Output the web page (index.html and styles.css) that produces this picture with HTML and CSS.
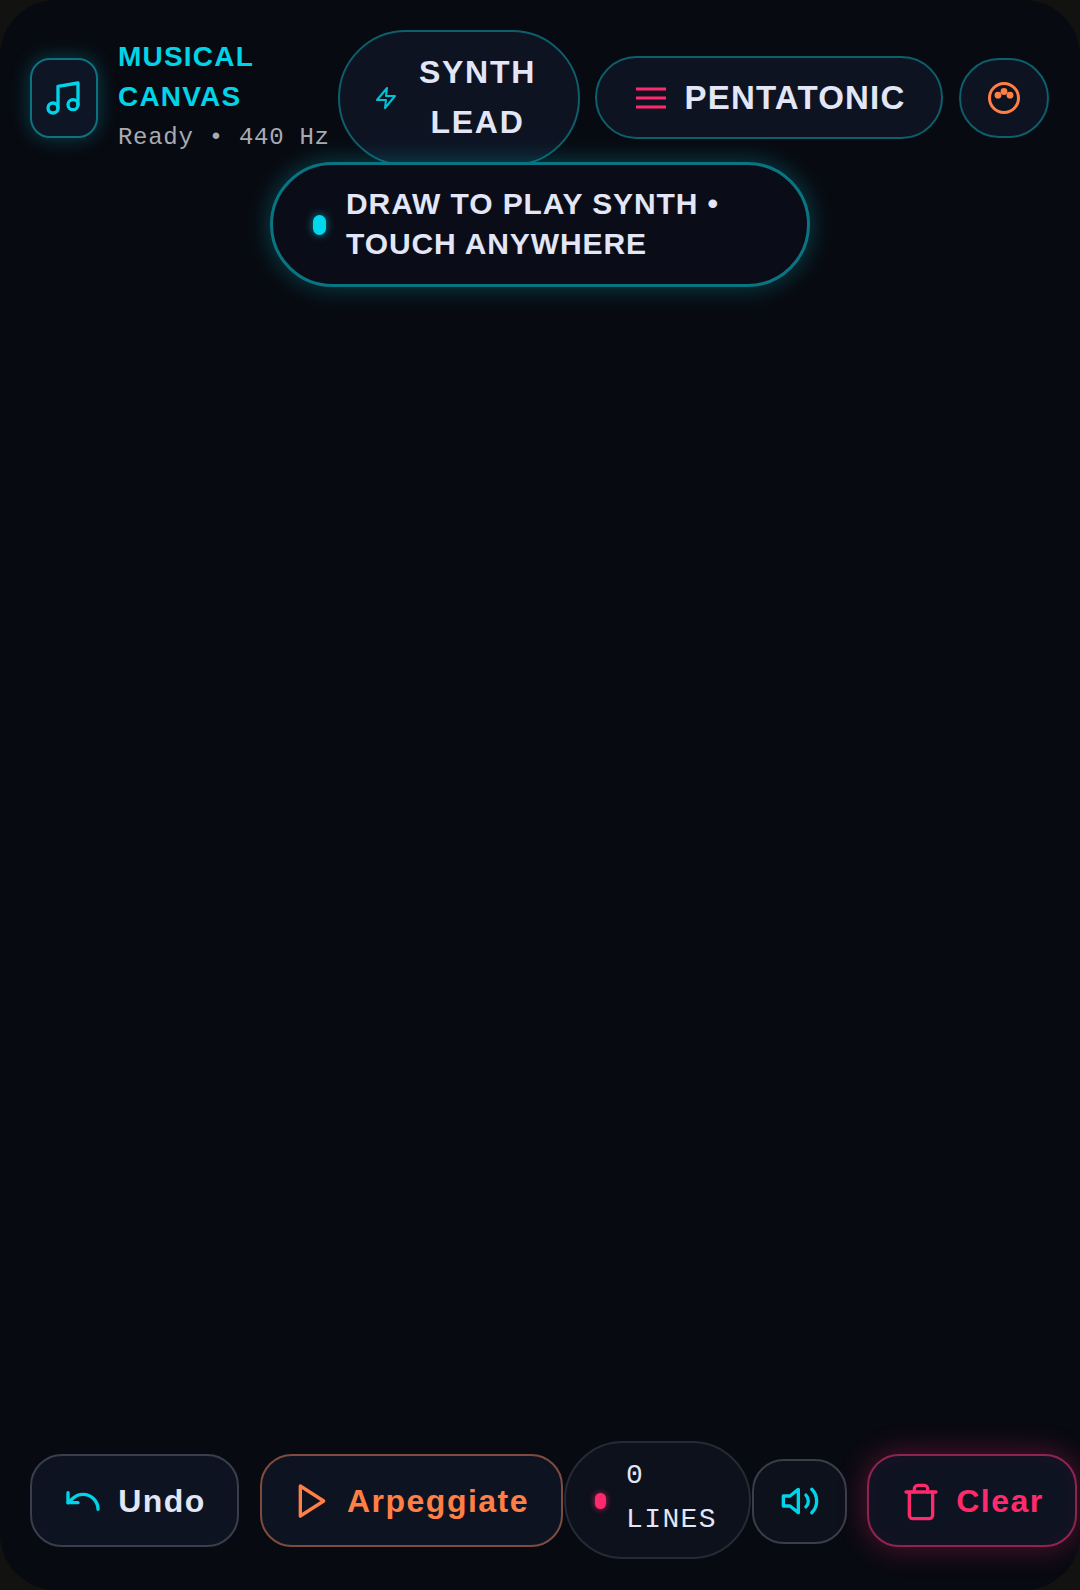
FILE: index.html
```html
<!DOCTYPE html>
<html>

<head>
    <meta charset="UTF-8" />
    <meta name="viewport" content="width=device-width, initial-scale=1" />
    <title>Musical Canvas</title>
    <link rel="stylesheet" href="styles.css">
</head>

<body>
    <section class="screen">
        <header class="top">
            <div class="logo">
                <svg class="logo-icon" viewBox="0 0 24 24">
                    <path d="M9 18V5l12-2v13" />
                    <circle cx="6" cy="18" r="3" />
                    <circle cx="18" cy="16" r="3" />
                </svg>
            </div>
            <div class="brand">
                <div class="brand-title">MUSICAL CANVAS</div>
                <div class="brand-status">Ready • 440 Hz</div>
            </div>
            <button class="pill synth">
                <svg class="synth-icon" viewBox="0 0 24 24">
                    <path d="M13 2 3 14h9l-1 8 10-12h-9l1-8z" />
                </svg>
                <span>SYNTH LEAD</span>
            </button>
            <button class="pill scale">
                <svg class="scale-icon" viewBox="0 0 30 24">
                    <path d="M0 3h30M0 12h30M0 21h30" />
                </svg>
                <span>PENTATONIC</span>
            </button>
            <button class="pill palette">
                <svg class="palette-icon" viewBox="0 0 32 32">
                    <circle class="ring" cx="16" cy="16" r="14.5" />
                    <circle cx="10" cy="13.2" r="3.4" />
                    <circle cx="16" cy="9.5" r="3.4" />
                    <circle cx="22" cy="13.2" r="3.4" />
                </svg>
            </button>
        </header>

        <div class="hint">
            <i class="hint-dot"></i>
            <span>DRAW TO PLAY SYNTH • TOUCH ANYWHERE</span>
        </div>

        <footer class="bottom">
            <button class="action undo">
                <svg class="undo-icon" viewBox="0 0 24 24">
                    <path d="M3 7v6h6" />
                    <path d="M21 17a9 9 0 0 0-9-9 9 9 0 0 0-6 2.3L3 13" />
                </svg>
                <span>Undo</span>
            </button>
            <button class="action arp">
                <svg class="arp-icon" viewBox="0 0 24 24">
                    <path d="M5 3l14 9-14 9z" />
                </svg>
                <span>Arpeggiate</span>
            </button>
            <div class="lines">
                <i class="lines-dot"></i>
                <span>0 LINES</span>
            </div>
            <button class="sound">
                <svg class="sound-icon" viewBox="0 0 24 24">
                    <path d="M11 5 6 9H2v6h4l5 4V5z" />
                    <path d="M15.54 8.46a5 5 0 0 1 0 7.07" />
                    <path d="M19.07 4.93a10 10 0 0 1 0 14.14" />
                </svg>
            </button>
            <button class="action clear">
                <svg class="clear-icon" viewBox="0 0 24 24">
                    <path d="M3 6h18" />
                    <path d="M19 6v14c0 1-1 2-2 2H7c-1 0-2-1-2-2V6" />
                    <path d="M8 6V4c0-1 1-2 2-2h4c1 0 2 1 2 2v2" />
                </svg>
                <span>Clear</span>
            </button>
        </footer>
    </section>
</body>

</html>
```

FILE: styles.css
```css
* {
    box-sizing: border-box;
}

body {
    margin: 0;
    padding: 0;
    width: 1080px;
    height: 1590px;
    overflow: hidden;
    background-color: #121310;
    font-family: "Liberation Sans", Arial, sans-serif;
}

svg {
    display: block;
    flex: none;
    fill: none;
    stroke-linecap: round;
    stroke-linejoin: round;
}

button {
    font-family: inherit;
    padding: 0;
    cursor: pointer;
}

.screen {
    width: 1080px;
    height: 1590px;
    display: flex;
    flex-direction: column;
    border-radius: 56px;
    background-color: #080a11;
    overflow: hidden;
}

.top {
    display: flex;
    align-items: center;
    padding: 30px 31px 0 30px;
}

.logo {
    width: 68px;
    height: 80px;
    padding-right: 2px;
    display: flex;
    align-items: center;
    justify-content: center;
    flex: none;
    border: 2px solid #0d7280;
    border-radius: 20px;
    background-color: #0e1626;
    box-shadow: 0 0 20px rgba(0, 212, 232, 0.28);
}

.logo-icon {
    width: 40px;
    height: 40px;
    stroke: #00d4e8;
    stroke-width: 2;
}

.brand {
    width: 220px;
    margin: 0 0 3px 20px;
    flex: none;
}

.brand-title {
    width: 180px;
    margin-bottom: 2px;
    color: #00d4e8;
    font-size: 28px;
    font-weight: bold;
    line-height: 40px;
    letter-spacing: 1.2px;
}

.brand-status {
    color: #a9abb3;
    font-family: "Liberation Mono", monospace;
    font-size: 24px;
    line-height: 38px;
    letter-spacing: 0.72px;
    white-space: nowrap;
}

.pill {
    display: flex;
    align-items: center;
    justify-content: center;
    border: 2px solid #0c5f6b;
    border-radius: 70px;
    background-color: #0e1322;
    color: #e2e6f6;
    font-weight: bold;
}

.synth {
    width: 242px;
    height: 136px;
    gap: 20px;
    padding: 0 7px 2px 0;
    font-size: 32px;
    line-height: 50px;
    letter-spacing: 1.7px;
    text-align: center;
}

.synth span {
    width: 120px;
}

.synth-icon {
    width: 24px;
    height: 24px;
    margin-top: 2px;
    stroke: #00c3d6;
    stroke-width: 2;
}

.scale {
    width: 348px;
    height: 83px;
    margin: 0 0 2px 15px;
    gap: 18px;
    padding: 2px 0 0 4px;
    font-size: 33px;
    letter-spacing: 1.2px;
}

.scale-icon {
    width: 30px;
    height: 24px;
    stroke: #ff2a6d;
    stroke-width: 3;
    stroke-linecap: butt;
}

.palette {
    width: 90px;
    height: 80px;
    margin-left: 16px;
}

.palette-icon {
    width: 32px;
    height: 32px;
    fill: #ff7f45;
}

.palette-icon .ring {
    fill: none;
    stroke: #ff7f45;
    stroke-width: 3;
}

.hint {
    width: 540px;
    height: 125px;
    margin: -4px auto 0;
    padding: 0 40px 2px;
    display: flex;
    align-items: center;
    gap: 20px;
    border: 3px solid #0a7582;
    border-radius: 63px;
    background-color: #0a0d18;
    box-shadow: 0 0 24px rgba(0, 212, 232, 0.3);
    color: #e2e6f6;
    font-size: 30px;
    font-weight: bold;
    line-height: 40px;
    letter-spacing: 0.9px;
}

.hint-dot {
    width: 13px;
    height: 20px;
    margin-top: 2px;
    flex: none;
    border-radius: 7px;
    background-color: #00d8ee;
    box-shadow: 0 0 8px rgba(0, 216, 238, 0.6);
}

.bottom {
    margin-top: auto;
    display: flex;
    align-items: center;
    padding: 0 2px 31px 30px;
}

.action {
    height: 93px;
    display: flex;
    align-items: center;
    justify-content: center;
    flex: none;
    gap: 15px;
    padding-top: 2px;
    border: 2px solid #3a3e4a;
    border-radius: 32px;
    background-color: #0e1322;
    color: #e2e6f6;
    font-size: 32px;
    font-weight: bold;
    letter-spacing: 1.5px;
}

.undo {
    width: 209px;
}

.undo-icon {
    width: 40px;
    height: 40px;
    stroke: #00d4e8;
    stroke-width: 2;
}

.arp {
    width: 303px;
    margin-left: 21px;
    padding-right: 2px;
    border-color: #7e4c3e;
    color: #ff7f45;
}

.arp-icon {
    width: 40px;
    height: 40px;
    stroke: #ff7f45;
    stroke-width: 2;
}

.lines {
    width: 187px;
    height: 118px;
    margin-left: 1px;
    padding-left: 29px;
    display: flex;
    align-items: center;
    flex: none;
    gap: 20px;
    border: 2px solid #262a35;
    border-radius: 59px;
    background-color: #0c111c;
    color: #e2e6f6;
    font-family: "Liberation Mono", monospace;
    font-size: 28px;
    line-height: 44px;
    letter-spacing: 1.4px;
}

.lines span {
    width: 100px;
    margin-top: -4px;
}

.lines-dot {
    width: 11px;
    height: 16px;
    margin-top: 2px;
    flex: none;
    border-radius: 6px;
    background-color: #ff2a6d;
    box-shadow: 0 0 6px rgba(255, 42, 109, 0.7);
}

.sound {
    width: 95px;
    height: 85px;
    margin: 2px 0 0 1px;
    display: flex;
    align-items: center;
    justify-content: center;
    flex: none;
    border: 2px solid #3a3e4a;
    border-radius: 32px;
    background-color: #0c111c;
}

.sound-icon {
    width: 40px;
    height: 40px;
    stroke: #00d4e8;
    stroke-width: 2;
}

.clear {
    width: 210px;
    margin-left: 20px;
    padding-left: 4px;
    border-color: #8f2450;
    color: #ff2a6d;
    box-shadow: 0 0 30px rgba(255, 42, 109, 0.32), inset 0 0 20px rgba(255, 42, 109, 0.05);
}

.clear-icon {
    width: 40px;
    height: 40px;
    margin: 1px 0 0 -3px;
    stroke: #ff2a6d;
    stroke-width: 2;
}
```
